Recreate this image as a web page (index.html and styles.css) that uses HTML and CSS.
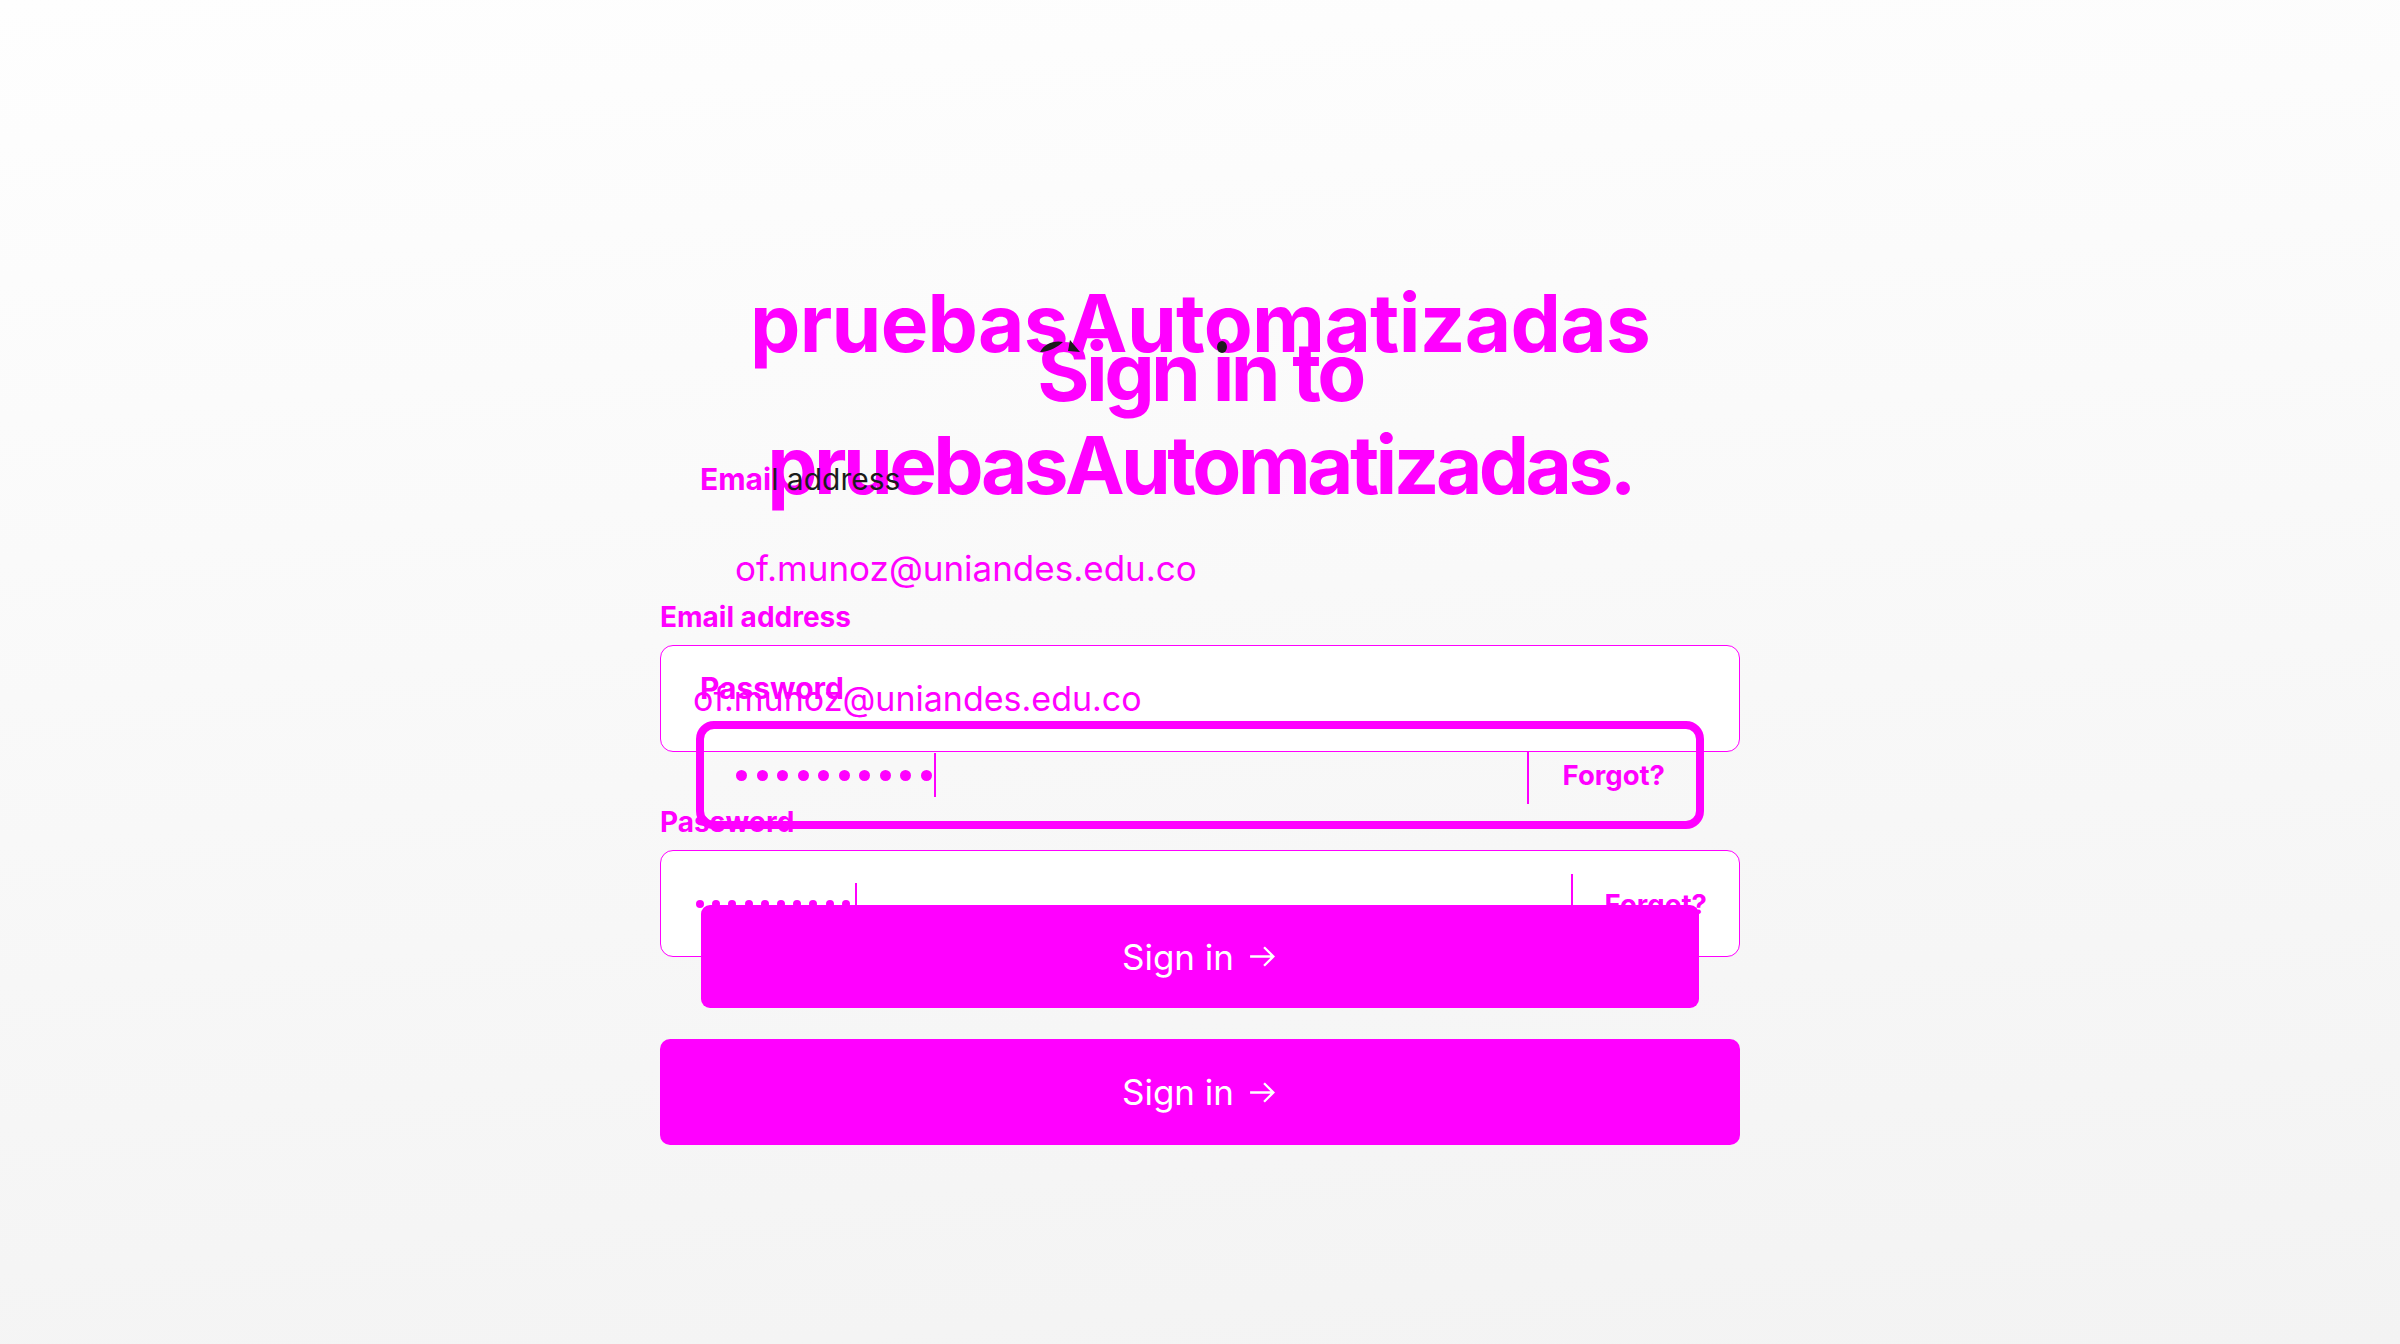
FILE: index.html
```html
<!DOCTYPE html>
<html lang="es">
<head>
<meta charset="utf-8">
<title>Sign in</title>
<link rel="stylesheet" href="styles.css">
</head>
<body>
<main class="stage">
  <section class="layer l2">
    <h1 class="title">Sign in to<br>pruebasAutomatizadas.</h1>
    <label class="label">Email address</label>
    <div class="box email">of.munoz@uniandes.edu.co</div>
    <label class="label">Password</label>
    <div class="box pass">
      <span class="dots"><i></i><i></i><i></i><i></i><i></i><i></i><i></i><i></i><i></i><i></i></span>
      <span class="caret"></span>
      <span class="spacer"></span>
      <span class="sep"></span>
      <span class="forgot">Forgot?</span>
    </div>
    <button class="btn">Sign in <svg class="arrow" viewBox="0 0 20 20"><path d="M2 10h15M11 4l6 6-6 6" fill="none" stroke="#fff" stroke-width="1.5"/></svg></button>
  </section>
  <section class="layer l1">
    <h1 class="title">pruebasAutomatizadas</h1>
    <label class="label"><span class="mg">Emai</span><span class="dk">l address</span></label>
    <div class="box email">of.munoz@uniandes.edu.co</div>
    <label class="label">Password</label>
    <div class="box pass">
      <span class="dots"><i></i><i></i><i></i><i></i><i></i><i></i><i></i><i></i><i></i><i></i></span>
      <span class="caret"></span>
      <span class="spacer"></span>
      <span class="sep"></span>
      <span class="forgot">Forgot?</span>
    </div>
    <button class="btn">Sign in <svg class="arrow" viewBox="0 0 20 20"><path d="M2 10h15M11 4l6 6-6 6" fill="none" stroke="#fff" stroke-width="1.5"/></svg></button>
  </section>
  <svg class="overlap" width="200" height="20" viewBox="0 0 200 20" aria-hidden="true">
    <path d="M0 14 C4 6 14 2 23 4 C18 9 10 13 2 14 Z" fill="#1c1c1c"/>
    <path d="M30 2 L40 14 L28 13 Z" fill="#1c1c1c"/>
    <ellipse cx="182" cy="9" rx="5" ry="6" fill="#1c1c1c"/>
  </svg>
</main>
</body>
</html>
```
FILE: styles.css
```css
html, body {
  margin: 0;
  padding: 0;
}
body {
  width: 2400px;
  height: 1344px;
  overflow: hidden;
  background: linear-gradient(175deg, #fefefe 0%, #f9f9f9 45%, #f3f3f3 100%);
  font-family: Inter, "Noto Sans", sans-serif;
  color: #ff00ff;
}
.stage {
  position: relative;
  display: grid;
  justify-content: center;
}
.layer {
  grid-area: 1 / 1;
  justify-self: center;
  display: flex;
  flex-direction: column;
}
.overlap {
  position: absolute;
  left: 1040px;
  top: 338px;
}
.title {
  margin: 0;
  font-weight: 700;
  text-align: center;
  color: #ff00ff;
}
.label {
  display: block;
  font-weight: 700;
  color: #ff00ff;
}
.box {
  box-sizing: border-box;
  display: flex;
  align-items: center;
}
.dots {
  display: flex;
}
.dots i {
  display: block;
  border-radius: 50%;
  background: #ff00ff;
}
.caret {
  width: 2px;
  background: #ff00ff;
  align-self: flex-start;
}
.spacer { flex: 1; }
.sep {
  width: 2px;
  background: #ff00ff;
  align-self: flex-start;
}
.forgot {
  font-weight: 700;
}
.btn {
  box-sizing: border-box;
  border: 0;
  background: #ff00ff;
  color: #fff;
  font-family: Inter, "Noto Sans", sans-serif;
  font-weight: 400;
  display: flex;
  align-items: center;
  justify-content: center;
  gap: 13px;
  padding: 0;
}
.arrow {
  width: 31px;
  height: 31px;
}

/* ---------- layer 2 (wider, underneath) ---------- */
.l2 {
  width: 1080px;
  margin-top: 325px;
}
.l2 .title {
  font-size: 80px;
  line-height: 93px;
  letter-spacing: -0.045em;
}
.l2 .label {
  font-size: 28px;
  line-height: 32px;
  margin-top: 90px;
}
.l2 .label + .box { margin-top: 12px; }
.l2 .box {
  height: 107px;
  background: #fff;
  border: 1.5px solid #ff00ff;
  border-radius: 13px;
  padding: 0 32px;
  font-size: 34px;
}
.l2 .email + .label { margin-top: 54px; }
.l2 .pass { padding-left: 35px; }
.l2 .dots { gap: 8.2px; }
.l2 .dots i { width: 8px; height: 8px; }
.l2 .caret { height: 60px; margin-top: 32px; margin-left: 5px; }
.l2 .sep { height: 60px; margin-top: 23px; }
.l2 .forgot { font-size: 27.5px; margin-left: 32px; }
.l2 .btn {
  margin-top: 82px;
  height: 106px;
  border-radius: 10px;
  font-size: 35px;
}

/* ---------- layer 1 (narrower, on top) ---------- */
.l1 {
  width: 1008px;
  margin-top: 273px;
}
.l1 .title {
  font-size: 80px;
  line-height: 100px;
  letter-spacing: -0.009em;
}
.l1 .label {
  font-size: 30px;
  line-height: 36px;
  margin-top: 88px;
  padding-left: 4px;
}
.l1 .label .dk {
  color: #1c1c1c;
  font-weight: 400;
}
.l1 .email {
  height: 92px;
  margin-top: 25px;
  padding: 0 39px;
  font-size: 35px;
}
.l1 .email + .label { margin-top: 56px; }
.l1 .pass {
  height: 108px;
  margin-top: 15px;
  border: 8px solid #ff00ff;
  border-radius: 18px;
  padding: 0 31px 0 32px;
}
.l1 .dots { gap: 9.5px; }
.l1 .dots i { width: 11px; height: 11px; }
.l1 .caret { height: 44px; margin-top: 24px; margin-left: 2px; }
.l1 .sep { height: 53px; margin-top: 22px; }
.l1 .forgot { font-size: 27.5px; margin-left: 34px; }
.l1 .btn {
  margin: 76px 5px 0;
  height: 103px;
  border-radius: 9px;
  font-size: 35px;
}
```
